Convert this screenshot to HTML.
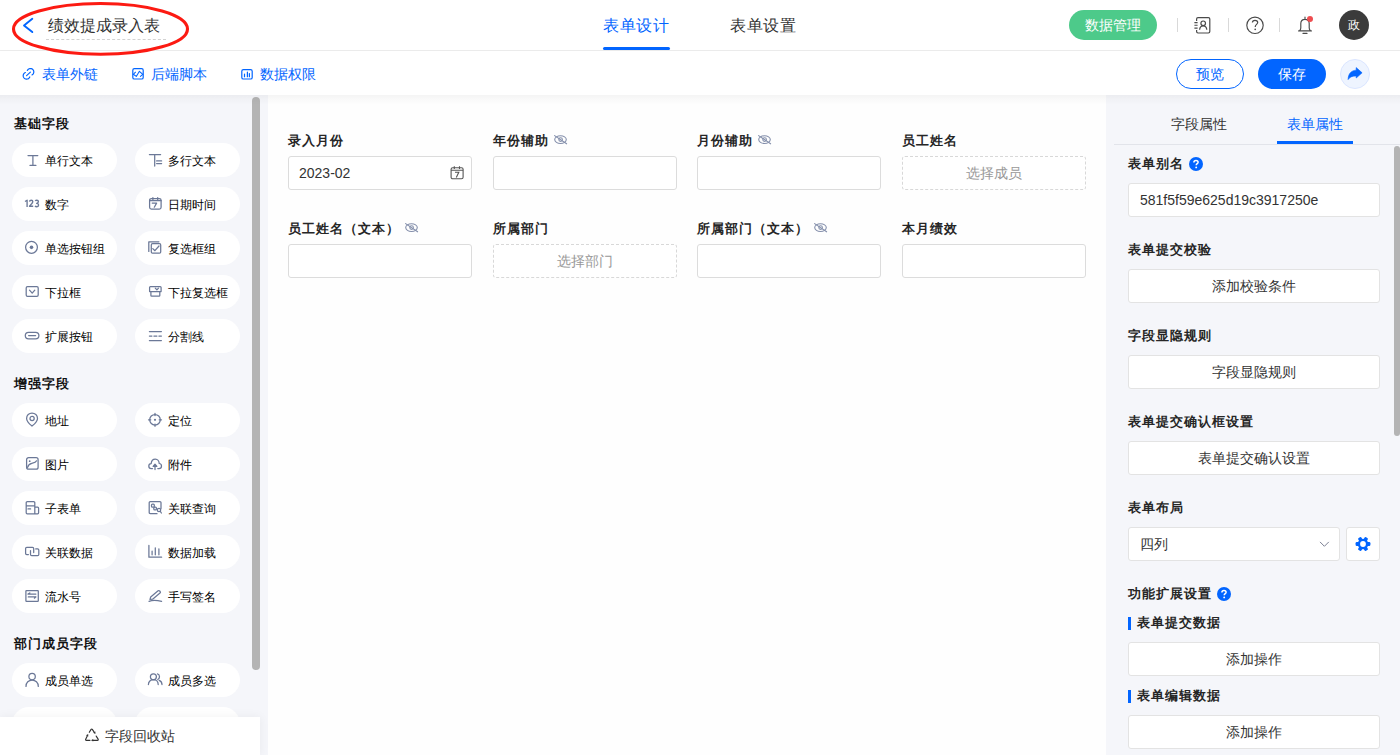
<!DOCTYPE html>
<html><head><meta charset="utf-8">
<style>
*{box-sizing:border-box;margin:0;padding:0}
html,body{width:1400px;height:755px;overflow:hidden;background:#fefefe;font-family:"Liberation Sans",sans-serif;color:#333}
.abs{position:absolute}
.t{position:absolute;white-space:nowrap;line-height:1}
#hdr{position:absolute;left:0;top:0;width:1400px;height:51px;background:#fff;border-bottom:1px solid #ededed}
#sub{position:absolute;left:0;top:51px;width:1400px;height:44px;background:#fff;box-shadow:0 1px 3px rgba(0,0,0,0.06)}
#left{position:absolute;left:0;top:95px;width:268px;height:660px;background:#f5f6fa}
#canvas{position:absolute;left:268px;top:95px;width:838px;height:660px;background:#fefefe}
#right{position:absolute;left:1106px;top:95px;width:294px;height:660px;background:#f5f6fa}
.chip{position:absolute;width:105px;height:34px;border-radius:17px;background:#fff}
.chip .ic{position:absolute;left:13px;top:10px;width:14px;height:14px;overflow:visible}
.chip .tx{position:absolute;left:33px;top:11px;font-size:12px;line-height:14px;color:#000;white-space:nowrap}
.sec{position:absolute;left:14px;font-size:13px;letter-spacing:1px;font-weight:bold;color:#111;line-height:14px}
.lbl{position:absolute;font-size:13px;letter-spacing:1px;font-weight:bold;color:#262626;line-height:14px;white-space:nowrap}
.inp{position:absolute;height:34px;width:184px;border:1px solid #dcdcdc;border-radius:3px;background:#fff}
.dash{position:absolute;height:34px;width:184px;border:1px dashed #d8d8d8;border-radius:3px;background:#fff;color:#999;font-size:14px;text-align:center;line-height:32px}
.rl{position:absolute;left:1128px;font-size:14px;font-weight:bold;color:#333;line-height:14px;white-space:nowrap}
.rb{position:absolute;left:1128px;width:252px;height:34px;border:1px solid #e3e3e3;border-radius:3px;background:#fff;font-size:14px;color:#333;text-align:center;line-height:32px}
</style></head>
<body>
<div id="hdr">
  <svg class="abs" style="left:0px;top:0px;z-index:5" width="200" height="60" viewBox="0 0 200 60"><ellipse cx="100.5" cy="28.9" rx="87" ry="25.4" fill="none" stroke="#fc1a12" stroke-width="3.1"/></svg>
  <svg class="abs" style="left:22px;top:17px" width="12" height="17" viewBox="0 0 12 17"><path d="M10.3 1.8 L2 8.4 L10.3 15.1" fill="none" stroke="#0265ff" stroke-width="1.9" stroke-linecap="round" stroke-linejoin="round"/></svg>
  <div class="t" style="left:48px;top:18px;font-size:16px;color:#333">绩效提成录入表</div>
  <div class="abs" style="left:46px;top:39px;width:120px;border-top:1px dashed #d2d2d2"></div>
  <div class="t" style="left:603px;top:18px;font-size:16px;color:#0265ff;letter-spacing:0.5px">表单设计</div>
  <div class="abs" style="left:603px;top:47px;width:67px;height:3px;border-radius:2px;background:#0265ff"></div>
  <div class="t" style="left:730px;top:18px;font-size:16px;color:#333;letter-spacing:0.5px">表单设置</div>
  <div class="abs" style="left:1069px;top:10px;width:88px;height:30px;border-radius:15px;background:#4dca8a;color:#fff;font-size:14px;line-height:30px;text-align:center">数据管理</div>
  <div class="abs" style="left:1177px;top:18px;width:1px;height:14px;background:#d9d9d9"></div>
  <div class="abs" style="left:1228px;top:18px;width:1px;height:14px;background:#d9d9d9"></div>
  <div class="abs" style="left:1279px;top:18px;width:1px;height:14px;background:#d9d9d9"></div>
  <svg class="abs" style="left:1190px;top:12px" width="24" height="26" viewBox="1190 12 24 26"><path d="M1196.6 21V19Q1196.6 17.6 1198 17.6H1208.4Q1209.8 17.6 1209.8 19V31.6Q1209.8 33 1208.4 33H1198Q1196.6 33 1196.6 31.6V30" fill="none" stroke="#4a4a4a" stroke-width="1.2"/><path d="M1194.4 22.6H1197.6 M1194.4 25.3H1197.6 M1194.4 28.1H1197.6" stroke="#4a4a4a" stroke-width="1.1"/><circle cx="1203.2" cy="23.3" r="2.3" fill="none" stroke="#4a4a4a" stroke-width="1.2"/><path d="M1199.6 29.8C1199.8 27.2 1201.4 25.8 1203.2 25.8C1205 25.8 1206.6 27.2 1206.8 29.8" fill="none" stroke="#4a4a4a" stroke-width="1.2"/></svg>
  <svg class="abs" style="left:1240px;top:10px" width="80" height="30" viewBox="1240 10 80 30"><circle cx="1255" cy="25.3" r="8.2" fill="none" stroke="#4a4a4a" stroke-width="1.15"/><path d="M1252.4 22.6C1252.4 21 1253.5 20.3 1255 20.3C1256.6 20.3 1257.7 21.2 1257.7 22.5C1257.7 24.3 1255.2 24.5 1255.2 26.9" fill="none" stroke="#4a4a4a" stroke-width="1.2"/><circle cx="1255.2" cy="29.3" r="0.85" fill="#4a4a4a"/><path d="M1305 17V19.2 M1299.8 30.4C1300.6 29.6 1300.8 28.8 1300.8 27.8V23.6C1300.8 21 1302.6 19.3 1305 19.3C1307.4 19.3 1309.2 21 1309.2 23.6V27.8C1309.2 28.8 1309.4 29.6 1310.2 30.4 M1298.6 30.9H1311.4 M1303 33.4H1307" fill="none" stroke="#4a4a4a" stroke-width="1.15" stroke-linecap="round"/><circle cx="1310" cy="18.9" r="3" fill="#ee4d50"/></svg>
  
  <div class="abs" style="left:1339px;top:10px;width:30px;height:30px;border-radius:15px;background:#3b3b3b;color:#fff;font-size:12px;line-height:30px;text-align:center">政</div>
</div>
<div id="sub">
<svg class="abs" style="left:0;top:0" width="400" height="44" viewBox="0 51 400 44"><path d="M27.32 70.46 L27.58 70.00 L27.92 69.58 L28.31 69.22 L28.76 68.92 L29.24 68.70 L29.76 68.56 L30.29 68.50 L30.82 68.53 L31.35 68.63 L31.85 68.82 L32.31 69.09 L32.73 69.42 L33.09 69.82 L33.38 70.27 L33.60 70.75 L33.74 71.27 L33.80 71.80 L33.77 72.34 L33.66 72.86 L33.47 73.36 L33.20 73.82 L32.87 74.24 L32.47 74.60 L32.02 74.89 M29.77 76.92 L29.53 77.43 L29.20 77.89 L28.81 78.29 L28.35 78.61 L27.85 78.86 L27.31 79.03 L26.75 79.10 L26.19 79.07 L25.63 78.96 L25.11 78.76 L24.63 78.47 L24.20 78.10 L23.83 77.67 L23.54 77.19 L23.34 76.67 L23.23 76.11 L23.20 75.55 L23.27 74.99 L23.44 74.45 L23.69 73.95 L24.01 73.49 L24.41 73.10 L24.87 72.77 L25.38 72.53 M26.6 75.6 L30.4 72.1" fill="none" stroke="#0265ff" stroke-width="1.2" stroke-linecap="round"/><rect x="132.8" y="68.6" width="10.4" height="10.4" rx="1.6" fill="none" stroke="#0265ff" stroke-width="1.2"/><path d="M135.5 72.2 L133.3 74.3 L136.3 76.4 L139.4 71.3 L142.8 74.3 L140.4 76.4" fill="none" stroke="#0265ff" stroke-width="1.05" stroke-linejoin="round" stroke-linecap="round"/><rect x="241.8" y="69.6" width="10.4" height="9.4" rx="1.6" fill="none" stroke="#0265ff" stroke-width="1.2"/><path d="M244.5 74.1V76.7 M247.4 72.2V76.7 M249.4 73.5V76.7" fill="none" stroke="#0265ff" stroke-width="1.2" stroke-linecap="round"/></svg>
  
  <div class="t" style="left:42px;top:16px;font-size:14px;color:#0265ff">表单外链</div>
  
  <div class="t" style="left:151px;top:16px;font-size:14px;color:#0265ff">后端脚本</div>
  
  <div class="t" style="left:260px;top:16px;font-size:14px;color:#0265ff">数据权限</div>
  <div class="abs" style="left:1176px;top:8px;width:68px;height:30px;border-radius:15px;border:1px solid #0265ff;background:#fff;color:#0265ff;font-size:14px;line-height:28px;text-align:center">预览</div>
  <div class="abs" style="left:1258px;top:8px;width:68px;height:30px;border-radius:15px;background:#0265ff;color:#fff;font-size:14px;line-height:30px;text-align:center">保存</div>
  <div class="abs" style="left:1340px;top:8px;width:30px;height:30px;border-radius:15px;border:1px solid #dbe6ff;background:#eef4ff"></div>
  <svg class="abs" style="left:1330px;top:0" width="50" height="44" viewBox="1330 51 50 44"><path d="M1362.1 72.8L1356.2 67.6V70.2C1351.5 70.4 1348.2 73.5 1348.1 79.6C1349.6 77.2 1351.8 75.9 1356.2 75.9V78Z" fill="#0265ff" stroke="#0265ff" stroke-width="0.6" stroke-linejoin="round"/></svg>
</div>
<div id="left">
<div class="sec" style="top:22px">基础字段</div>
<div class="chip" style="left:12px;top:48px"><svg class="ic" width="14" height="14" viewBox="0 0 14 14" overflow="visible"><path d="M3 2.6H12.8 M7.9 2.6V12.4 M5 12.4H10.9" fill="none" stroke="#6b7897" stroke-width="1.25" stroke-linecap="round" stroke-linejoin="round" stroke-linecap="butt"/></svg><div class="tx">单行文本</div></div>
<div class="chip" style="left:135px;top:48px"><svg class="ic" width="14" height="14" viewBox="0 0 14 14" overflow="visible"><path d="M1.4 1.6H12.6 M6.7 1.6V13 M8.6 7.9H13.6 M8.6 10.5H13.6" fill="none" stroke="#6b7897" stroke-width="1.25" stroke-linecap="round" stroke-linejoin="round" stroke-linecap="butt"/></svg><div class="tx">多行文本</div></div>
<div class="chip" style="left:12px;top:92px"><svg class="ic" width="14" height="14" viewBox="0 0 14 14" overflow="visible"><path d="M0 4.5L2.1 3.2V9.9 M4.5 4.6Q4.7 3.2 6.2 3.2Q7.8 3.2 7.8 4.6Q7.8 5.7 6.5 6.9L4.5 9.2H8.2 M10.2 3.9Q10.7 3.2 11.9 3.2Q13.4 3.2 13.4 4.6Q13.4 6.1 11.6 6.3Q13.6 6.4 13.6 8Q13.6 9.7 11.9 9.7Q10.6 9.7 10 9" fill="none" stroke="#6b7897" stroke-width="1.35" stroke-linejoin="round"/></svg><div class="tx">数字</div></div>
<div class="chip" style="left:135px;top:92px"><svg class="ic" width="14" height="14" viewBox="0 0 14 14" overflow="visible"><rect x="1.6" y="1.5" width="11.5" height="10.6" rx="1.8" fill="none" stroke="#6b7897" stroke-width="1.25" stroke-linecap="round" stroke-linejoin="round"/><path d="M1.6 3.7H13.1 M4.9 0.6V3 M9.7 0.6V3 M4.2 6.1H8.6L6.3 10.2" fill="none" stroke="#6b7897" stroke-width="1.25" stroke-linecap="round" stroke-linejoin="round" stroke-width="1.1"/></svg><div class="tx">日期时间</div></div>
<div class="chip" style="left:12px;top:136px"><svg class="ic" width="14" height="14" viewBox="0 0 14 14" overflow="visible"><circle cx="6.5" cy="6.35" r="5.9" fill="none" stroke="#6b7897" stroke-width="1.25" stroke-linecap="round" stroke-linejoin="round"/><circle cx="6.5" cy="6.35" r="1.8" fill="#6b7897"/></svg><div class="tx">单选按钮组</div></div>
<div class="chip" style="left:135px;top:136px"><svg class="ic" width="14" height="14" viewBox="0 0 14 14" overflow="visible"><path d="M0.8 10.4V0.8H10.9" fill="none" stroke="#6b7897" stroke-width="1.25" stroke-linecap="round" stroke-linejoin="round" stroke-linecap="butt"/><rect x="3.3" y="2.7" width="9.4" height="9.4" rx="1.2" fill="none" stroke="#6b7897" stroke-width="1.25" stroke-linecap="round" stroke-linejoin="round"/><path d="M4.8 7.6L6.9 9.7L11 5" fill="none" stroke="#6b7897" stroke-width="1.25" stroke-linecap="round" stroke-linejoin="round"/></svg><div class="tx">复选框组</div></div>
<div class="chip" style="left:12px;top:180px"><svg class="ic" width="14" height="14" viewBox="0 0 14 14" overflow="visible"><rect x="1.2" y="1.6" width="12" height="9.7" rx="1.3" fill="none" stroke="#6b7897" stroke-width="1.25" stroke-linecap="round" stroke-linejoin="round"/><path d="M4.5 5.1L7.2 8.1L9.8 5.1" fill="none" stroke="#6b7897" stroke-width="1.25" stroke-linecap="round" stroke-linejoin="round"/></svg><div class="tx">下拉框</div></div>
<div class="chip" style="left:135px;top:180px"><svg class="ic" width="14" height="14" viewBox="0 0 14 14" overflow="visible"><path d="M2.4 1.6H12.2Q13.1 1.6 13.1 2.5V6.6H1.6V2.5Q1.6 1.6 2.4 1.6Z M2.9 6.6V10.4Q2.9 11.2 3.7 11.2H11.1Q11.8 11.2 11.8 10.4V6.6" fill="none" stroke="#6b7897" stroke-width="1.25" stroke-linecap="round" stroke-linejoin="round"/><path d="M7.3 3.1L8.9 4.9L10.5 3.1" fill="none" stroke="#6b7897" stroke-width="1.25" stroke-linecap="round" stroke-linejoin="round" stroke-width="1.1"/></svg><div class="tx">下拉复选框</div></div>
<div class="chip" style="left:12px;top:224px"><svg class="ic" width="14" height="14" viewBox="0 0 14 14" overflow="visible"><rect x="0.3" y="3.3" width="13.6" height="6.6" rx="3.3" fill="none" stroke="#6b7897" stroke-width="1.25" stroke-linecap="round" stroke-linejoin="round"/><path d="M3.6 6.6H10.6" fill="none" stroke="#6b7897" stroke-width="1.25" stroke-linecap="round" stroke-linejoin="round" stroke-width="1.4"/></svg><div class="tx">扩展按钮</div></div>
<div class="chip" style="left:135px;top:224px"><svg class="ic" width="14" height="14" viewBox="0 0 14 14" overflow="visible"><path d="M1.4 2.5H13.4 M1.4 11.5H13.4" fill="none" stroke="#6b7897" stroke-width="1.25" stroke-linecap="round" stroke-linejoin="round" stroke-linecap="butt"/><path d="M1.4 7.1H3.9 M5.9 7.1H8.9 M10.9 7.1H13.4" fill="none" stroke="#6b7897" stroke-width="1.25" stroke-linecap="round" stroke-linejoin="round" stroke-linecap="butt"/></svg><div class="tx">分割线</div></div>
<div class="sec" style="top:282px">增强字段</div>
<div class="chip" style="left:12px;top:308px"><svg class="ic" width="14" height="14" viewBox="0 0 14 14" overflow="visible"><path d="M7 13.1C7 13.1 1.6 8.6 1.6 5.4C1.6 2.3 4 0 7 0C10 0 12.5 2.3 12.5 5.4C12.5 8.6 7 13.1 7 13.1Z" fill="none" stroke="#6b7897" stroke-width="1.25" stroke-linecap="round" stroke-linejoin="round"/><circle cx="7.1" cy="5.5" r="2.1" fill="none" stroke="#6b7897" stroke-width="1.25" stroke-linecap="round" stroke-linejoin="round"/></svg><div class="tx">地址</div></div>
<div class="chip" style="left:135px;top:308px"><svg class="ic" width="14" height="14" viewBox="0 0 14 14" overflow="visible"><circle cx="7" cy="6.8" r="5.3" fill="none" stroke="#6b7897" stroke-width="1.25" stroke-linecap="round" stroke-linejoin="round"/><circle cx="7" cy="6.8" r="1.1" fill="#6b7897"/><path d="M7 0.3V2.6 M7 11V13.3 M0.5 6.8H2.8 M11.2 6.8H13.5" fill="none" stroke="#6b7897" stroke-width="1.25" stroke-linecap="round" stroke-linejoin="round" stroke-width="1.5"/></svg><div class="tx">定位</div></div>
<div class="chip" style="left:12px;top:352px"><svg class="ic" width="14" height="14" viewBox="0 0 14 14" overflow="visible"><rect x="1.6" y="0.7" width="11.5" height="11.5" rx="2" fill="none" stroke="#6b7897" stroke-width="1.25" stroke-linecap="round" stroke-linejoin="round"/><path d="M2.6 10.3C3.5 6.5 5.5 6.6 7.5 6.2C9.5 5.8 10.8 5.3 11.6 3.8" fill="none" stroke="#6b7897" stroke-width="1.25" stroke-linecap="round" stroke-linejoin="round" stroke-width="1.1"/><circle cx="4.7" cy="4.2" r="0.9" fill="#6b7897"/></svg><div class="tx">图片</div></div>
<div class="chip" style="left:135px;top:352px"><svg class="ic" width="14" height="14" viewBox="0 0 14 14" overflow="visible"><path d="M4.5 11.6H3.3C1.7 11.6 0.8 10.3 0.8 9C0.8 7.6 1.9 6.5 3.2 6.5C3.4 3.9 5.2 2 7.3 2C9.6 2 11.2 4 11.2 6.5C12.5 6.6 13.5 7.6 13.5 9C13.5 10.4 12.5 11.6 10.9 11.6H9.8" fill="none" stroke="#6b7897" stroke-width="1.25" stroke-linecap="round" stroke-linejoin="round"/><path d="M7 12.6V8.3" fill="none" stroke="#6b7897" stroke-width="1.25" stroke-linecap="round" stroke-linejoin="round"/><path d="M5.1 9.3L7 7.2L8.9 9.3Z" fill="#6b7897" fill="none" stroke="#6b7897" stroke-width="1.25" stroke-linecap="round" stroke-linejoin="round" stroke-width="0.8"/></svg><div class="tx">附件</div></div>
<div class="chip" style="left:12px;top:396px"><svg class="ic" width="14" height="14" viewBox="0 0 14 14" overflow="visible"><path d="M9.8 6.2V1.8Q9.8 0.7 8.7 0.7H2.3Q1.2 0.7 1.2 1.8V11.8Q1.2 12.9 2.3 12.9H12.6Q13.6 12.9 13.6 11.8V7.2Q13.6 6.2 12.6 6.2H9.8V12.9 M1.2 4.9H9.8 M3 7.9H5.6" fill="none" stroke="#6b7897" stroke-width="1.25" stroke-linecap="round" stroke-linejoin="round"/></svg><div class="tx">子表单</div></div>
<div class="chip" style="left:135px;top:396px"><svg class="ic" width="14" height="14" viewBox="0 0 14 14" overflow="visible"><path d="M9 12.7H2.3Q1.2 12.7 1.2 11.6V1.6Q1.2 0.5 2.3 0.5H11.9Q13 0.5 13 1.6V7.6" fill="none" stroke="#6b7897" stroke-width="1.25" stroke-linecap="round" stroke-linejoin="round"/><rect x="3.5" y="3" width="2.8" height="3.2" rx="1" fill="none" stroke="#6b7897" stroke-width="1.25" stroke-linecap="round" stroke-linejoin="round" stroke-width="1.1"/><rect x="5.8" y="6.2" width="2.6" height="2.6" rx="0.9" fill="none" stroke="#6b7897" stroke-width="1.25" stroke-linecap="round" stroke-linejoin="round" stroke-width="1.1"/><circle cx="11" cy="9" r="1.7" fill="none" stroke="#6b7897" stroke-width="1.25" stroke-linecap="round" stroke-linejoin="round"/><path d="M12.3 10.4L13.4 12" fill="none" stroke="#6b7897" stroke-width="1.25" stroke-linecap="round" stroke-linejoin="round"/></svg><div class="tx">关联查询</div></div>
<div class="chip" style="left:12px;top:440px"><svg class="ic" width="14" height="14" viewBox="0 0 14 14" overflow="visible"><path d="M3.4 9.5H1.8Q0.6 9.5 0.6 8.3V3.6Q0.6 2.4 1.8 2.4H7.5Q8.7 2.4 8.7 3.6V7.6 M5.5 5.6V9.5Q5.5 10.7 6.7 10.7H12.6Q13.8 10.7 13.8 9.5V5Q13.8 3.9 12.6 3.9H10.7" fill="none" stroke="#6b7897" stroke-width="1.25" stroke-linecap="round" stroke-linejoin="round" stroke-width="1.35"/></svg><div class="tx">关联数据</div></div>
<div class="chip" style="left:135px;top:440px"><svg class="ic" width="14" height="14" viewBox="0 0 14 14" overflow="visible"><path d="M0.9 0.4V12.2H13.6" fill="none" stroke="#6b7897" stroke-width="1.25" stroke-linecap="round" stroke-linejoin="round" stroke-width="1.35" stroke-linecap="butt"/><path d="M4.1 6V9.8 M7.3 2.8V9.8 M10.9 3.8V9.8" fill="none" stroke="#6b7897" stroke-width="1.25" stroke-linecap="round" stroke-linejoin="round" stroke-width="1.35" stroke-linecap="butt"/></svg><div class="tx">数据加载</div></div>
<div class="chip" style="left:12px;top:484px"><svg class="ic" width="14" height="14" viewBox="0 0 14 14" overflow="visible"><rect x="0.9" y="1.5" width="12.4" height="10.9" rx="0.6" fill="none" stroke="#6b7897" stroke-width="1.25" stroke-linecap="round" stroke-linejoin="round" stroke-width="1.35"/><path d="M2.9 5.1H10.9 M3.3 7.9H10.9 M4.8 3.9L3 5.1 M9.4 9.2L10.9 7.9" fill="none" stroke="#6b7897" stroke-width="1.25" stroke-linecap="round" stroke-linejoin="round" stroke-width="1.3"/></svg><div class="tx">流水号</div></div>
<div class="chip" style="left:135px;top:484px"><svg class="ic" width="14" height="14" viewBox="0 0 14 14" overflow="visible"><path d="M2 10.4L2.7 7.9L10.1 1.8Q11 1.2 11.7 2L12.2 2.6Q12.8 3.4 12 4.1L4.6 10.2Z" fill="none" stroke="#6b7897" stroke-width="1.25" stroke-linecap="round" stroke-linejoin="round" stroke-width="1.2"/><path d="M1 12.3C4 11.2 9 11.2 13.6 12.4" fill="none" stroke="#6b7897" stroke-width="1.25" stroke-linecap="round" stroke-linejoin="round" stroke-width="1.2"/></svg><div class="tx">手写签名</div></div>
<div class="sec" style="top:542px">部门成员字段</div>
<div class="chip" style="left:12px;top:568px"><svg class="ic" width="14" height="14" viewBox="0 0 14 14" overflow="visible"><circle cx="7.1" cy="3.6" r="3.2" fill="none" stroke="#6b7897" stroke-width="1.25" stroke-linecap="round" stroke-linejoin="round"/><path d="M1 13.4C1 9.6 3.7 7 7.1 7C10.5 7 13.3 9.6 13.3 13.4" fill="none" stroke="#6b7897" stroke-width="1.25" stroke-linecap="round" stroke-linejoin="round"/></svg><div class="tx">成员单选</div></div>
<div class="chip" style="left:135px;top:568px"><svg class="ic" width="14" height="14" viewBox="0 0 14 14" overflow="visible"><circle cx="5.4" cy="3.8" r="3" fill="none" stroke="#6b7897" stroke-width="1.25" stroke-linecap="round" stroke-linejoin="round"/><path d="M0.4 11.6C0.4 8.8 2.6 6.6 5.4 6.6C8.2 6.6 10.2 8.8 10.2 11.6" fill="none" stroke="#6b7897" stroke-width="1.25" stroke-linecap="round" stroke-linejoin="round"/><path d="M9.5 0.9C10.9 1.2 11.5 2.4 11.5 3.8C11.5 5 10.9 6 9.8 6.5 M11.2 7.3C13 8 14 9.7 14 11.6" fill="none" stroke="#6b7897" stroke-width="1.25" stroke-linecap="round" stroke-linejoin="round"/></svg><div class="tx">成员多选</div></div>
<div class="chip" style="left:12px;top:612px"></div>
<div class="chip" style="left:135px;top:612px"></div>
<div class="abs" style="left:252px;top:2px;width:8px;height:573px;border-radius:4px;background:#b4b4b4"></div>
<div class="abs" style="left:0;top:622px;width:260px;height:38px;background:#fff;box-shadow:0 0 10px rgba(0,0,0,0.06)"><svg class="abs" style="left:80px;top:5px" width="24" height="26" viewBox="0 0 24 26"><path d="M9.3 10.3L11.1 7.4Q11.7 6.5 12.3 7.4L14.5 10.6 M7.5 13.6L5.7 17.2Q5.2 18.3 6.4 18.3H10 M13 18.3H17.4Q18.7 18.3 18.1 17.1L16.2 14.1" fill="none" stroke="#333" stroke-width="1.15" stroke-linecap="round" stroke-linejoin="round"/><path d="M15.4 12.1L15.4 9.45L13.2 10.8Z M8.2 12.05L8.26 14.6L5.98 13.36Z M11 18.3L13.2 17L13.2 19.6Z" fill="#333"/></svg><div class="t" style="left:105px;top:12px;font-size:14px;color:#333">字段回收站</div></div>
</div>
<div id="canvas">
<div class="lbl" style="left:20px;top:39px">录入月份</div>
<div class="inp" style="left:20px;top:61px"><div class="t" style="left:10px;top:9px;font-size:14px;color:#333">2023-02</div><svg class="abs" style="left:155px;top:3px" width="26" height="26" viewBox="0 0 26 26"><rect x="7.1" y="7.7" width="12" height="11.1" rx="1.6" fill="none" stroke="#555" stroke-width="1.1"/><path d="M7.1 10.3H19.1 M10.3 6.3V8.9 M15.5 6.3V8.9" stroke="#555" stroke-width="1.1"/><path d="M11 12.2H14.8L12.3 17.4" fill="none" stroke="#555" stroke-width="1.1"/></svg></div>
<div class="lbl" style="left:225px;top:39px">年份辅助</div><svg class="abs" style="left:286px;top:40px" width="14" height="11" viewBox="0 0 14 11"><ellipse cx="6.5" cy="4.6" rx="5.8" ry="3.9" fill="none" stroke="#8590ac" stroke-width="1.1"/><circle cx="6.6" cy="4.6" r="1.8" fill="none" stroke="#8590ac" stroke-width="1.1"/><path d="M0.6 0.6L12.6 8.8" stroke="#8590ac" stroke-width="1.1" stroke-linecap="round"/></svg>
<div class="inp" style="left:225px;top:61px"></div>
<div class="lbl" style="left:429px;top:39px">月份辅助</div><svg class="abs" style="left:490px;top:40px" width="14" height="11" viewBox="0 0 14 11"><ellipse cx="6.5" cy="4.6" rx="5.8" ry="3.9" fill="none" stroke="#8590ac" stroke-width="1.1"/><circle cx="6.6" cy="4.6" r="1.8" fill="none" stroke="#8590ac" stroke-width="1.1"/><path d="M0.6 0.6L12.6 8.8" stroke="#8590ac" stroke-width="1.1" stroke-linecap="round"/></svg>
<div class="inp" style="left:429px;top:61px"></div>
<div class="lbl" style="left:634px;top:39px">员工姓名</div>
<div class="dash" style="left:634px;top:61px">选择成员</div>
<div class="lbl" style="left:20px;top:127px">员工姓名（文本）</div><svg class="abs" style="left:137px;top:128px" width="14" height="11" viewBox="0 0 14 11"><ellipse cx="6.5" cy="4.6" rx="5.8" ry="3.9" fill="none" stroke="#8590ac" stroke-width="1.1"/><circle cx="6.6" cy="4.6" r="1.8" fill="none" stroke="#8590ac" stroke-width="1.1"/><path d="M0.6 0.6L12.6 8.8" stroke="#8590ac" stroke-width="1.1" stroke-linecap="round"/></svg>
<div class="inp" style="left:20px;top:149px"></div>
<div class="lbl" style="left:225px;top:127px">所属部门</div>
<div class="dash" style="left:225px;top:149px">选择部门</div>
<div class="lbl" style="left:429px;top:127px">所属部门（文本）</div><svg class="abs" style="left:546px;top:128px" width="14" height="11" viewBox="0 0 14 11"><ellipse cx="6.5" cy="4.6" rx="5.8" ry="3.9" fill="none" stroke="#8590ac" stroke-width="1.1"/><circle cx="6.6" cy="4.6" r="1.8" fill="none" stroke="#8590ac" stroke-width="1.1"/><path d="M0.6 0.6L12.6 8.8" stroke="#8590ac" stroke-width="1.1" stroke-linecap="round"/></svg>
<div class="inp" style="left:429px;top:149px"></div>
<div class="lbl" style="left:634px;top:127px">本月绩效</div>
<div class="inp" style="left:634px;top:149px"></div>
</div>
<div id="right">
<div class="t" style="left:65px;top:22px;font-size:14px;color:#333">字段属性</div>
<div class="t" style="left:181px;top:22px;font-size:14px;color:#0265ff">表单属性</div>
<div class="abs" style="left:8px;top:49px;width:286px;height:1px;background:#e2e4ea"></div>
<div class="abs" style="left:171px;top:46px;width:76px;height:3px;background:#0265ff"></div>
<div class="abs" style="left:288px;top:51px;width:6px;height:290px;border-radius:3px;background:#b4b4b4"></div>
<div class="lbl" style="left:22px;top:62px">表单别名</div><svg class="abs" style="left:83px;top:62px" width="14" height="14" viewBox="0 0 14 14"><circle cx="7" cy="7" r="7" fill="#0265ff"/><path d="M4.9 5.4C4.9 4.1 5.8 3.4 7 3.4C8.2 3.4 9.1 4.1 9.1 5.2C9.1 6.6 7.2 6.7 7.2 8.3" fill="none" stroke="#fff" stroke-width="1.5"/><circle cx="7.2" cy="10.4" r="0.95" fill="#fff"/></svg>
<div class="rb" style="left:22px;top:88px;text-align:left;padding-left:11px">581f5f59e625d19c3917250e</div>
<div class="lbl" style="left:22px;top:148px">表单提交校验</div>
<div class="rb" style="left:22px;top:174px">添加校验条件</div>
<div class="lbl" style="left:22px;top:234px">字段显隐规则</div>
<div class="rb" style="left:22px;top:260px">字段显隐规则</div>
<div class="lbl" style="left:22px;top:320px">表单提交确认框设置</div>
<div class="rb" style="left:22px;top:346px">表单提交确认设置</div>
<div class="lbl" style="left:22px;top:406px">表单布局</div>
<div class="rb" style="left:22px;top:432px;width:212px;text-align:left;padding-left:11px">四列<svg class="abs" style="left:189px;top:13px" width="12" height="8" viewBox="0 0 12 8"><path d="M2 0.9L6.4 5.3L10.8 0.9" fill="none" stroke="#7a7f92" stroke-width="1"/></svg></div>
<div class="rb" style="left:240px;top:432px;width:34px"><svg class="abs" style="left:8px;top:8px" width="16" height="16" viewBox="-8 -8 16 16"><g fill="#0265ff"><rect x="-1.9" y="-7.4" width="3.8" height="3.6" rx="1.2" transform="rotate(90)"/><rect x="-1.9" y="-7.4" width="3.8" height="3.6" rx="1.2" transform="rotate(150)"/><rect x="-1.9" y="-7.4" width="3.8" height="3.6" rx="1.2" transform="rotate(210)"/><rect x="-1.9" y="-7.4" width="3.8" height="3.6" rx="1.2" transform="rotate(270)"/><rect x="-1.9" y="-7.4" width="3.8" height="3.6" rx="1.2" transform="rotate(330)"/><rect x="-1.9" y="-7.4" width="3.8" height="3.6" rx="1.2" transform="rotate(390)"/><circle r="5.3"/></g><circle r="2.9" fill="#fff"/></svg></div>
<div class="lbl" style="left:22px;top:492px">功能扩展设置</div><svg class="abs" style="left:111px;top:492px" width="14" height="14" viewBox="0 0 14 14"><circle cx="7" cy="7" r="7" fill="#0265ff"/><path d="M4.9 5.4C4.9 4.1 5.8 3.4 7 3.4C8.2 3.4 9.1 4.1 9.1 5.2C9.1 6.6 7.2 6.7 7.2 8.3" fill="none" stroke="#fff" stroke-width="1.5"/><circle cx="7.2" cy="10.4" r="0.95" fill="#fff"/></svg>
<div class="abs" style="left:22px;top:522px;width:3px;height:13px;background:#0265ff"></div>
<div class="lbl" style="left:31px;top:521px;font-size:13px;letter-spacing:1px">表单提交数据</div>
<div class="rb" style="left:22px;top:547px">添加操作</div>
<div class="abs" style="left:22px;top:595px;width:3px;height:13px;background:#0265ff"></div>
<div class="lbl" style="left:31px;top:594px;font-size:13px;letter-spacing:1px">表单编辑数据</div>
<div class="rb" style="left:22px;top:620px">添加操作</div>
</div>
<div class="abs" style="left:0;top:95px;width:1400px;height:10px;z-index:4;background:linear-gradient(to bottom,rgba(0,0,0,0.04),rgba(0,0,0,0.02) 40%,rgba(0,0,0,0))"></div>
</body></html>
